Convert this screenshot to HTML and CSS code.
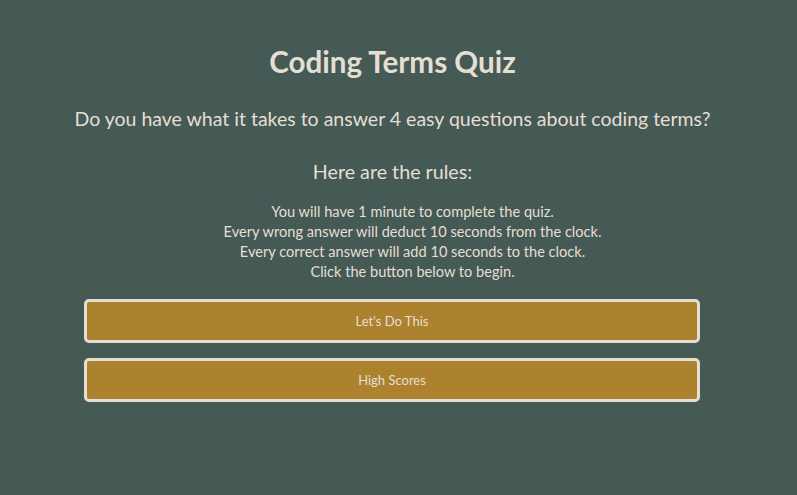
FILE: index.html
```html
<!DOCTYPE html>
<html>
<head>
<meta charset="utf-8">
<link rel="stylesheet" href="styles.css">
</head>
<body>
<main class="quiz">
  <h1 class="title">Coding Terms Quiz</h1>
  <p class="lead">Do you have what it takes to answer 4 easy questions about coding terms?</p>
  <p class="rules-head">Here are the rules:</p>
  <ul class="rules">
    <li>You will have 1 minute to complete the quiz.</li>
    <li>Every wrong answer will deduct 10 seconds from the clock.</li>
    <li>Every correct answer will add 10 seconds to the clock.</li>
    <li>Click the button below to begin.</li>
  </ul>
  <div class="actions">
    <button class="btn">Let's Do This</button>
    <button class="btn">High Scores</button>
  </div>
</main>
</body>
</html>
```
FILE: styles.css
```css
html, body {
  margin: 0;
  height: 100%;
  background: #455955;
}
body {
  font-family: Lato, "Open Sans", sans-serif;
  color: #e5dfd3;
}
.quiz {
  padding: 43px 12px 0 0;
  text-align: center;
}
.title {
  margin: 0;
  font-size: 29.6px;
  line-height: 38px;
  font-weight: 700;
}
.lead {
  margin: 25px 0 0;
  font-size: 19.5px;
  line-height: 26px;
  white-space: nowrap;
}
.rules-head {
  margin: 27px 0 0;
  font-size: 19.7px;
  line-height: 26px;
}
.rules {
  margin: 17px 0 0;
  padding: 0 0 0 40px;
  list-style: none;
  font-size: 14.6px;
  line-height: 20px;
}
.actions {
  margin: 17px 85px 0 84px;
  display: flex;
  flex-direction: column;
  gap: 15px;
}
.btn {
  height: 44px;
  background: #ac822f;
  border: 3px solid #e5dfd3;
  border-radius: 5px;
  color: #e5dfd3;
  font-family: inherit;
  font-size: 13px;
}
```
